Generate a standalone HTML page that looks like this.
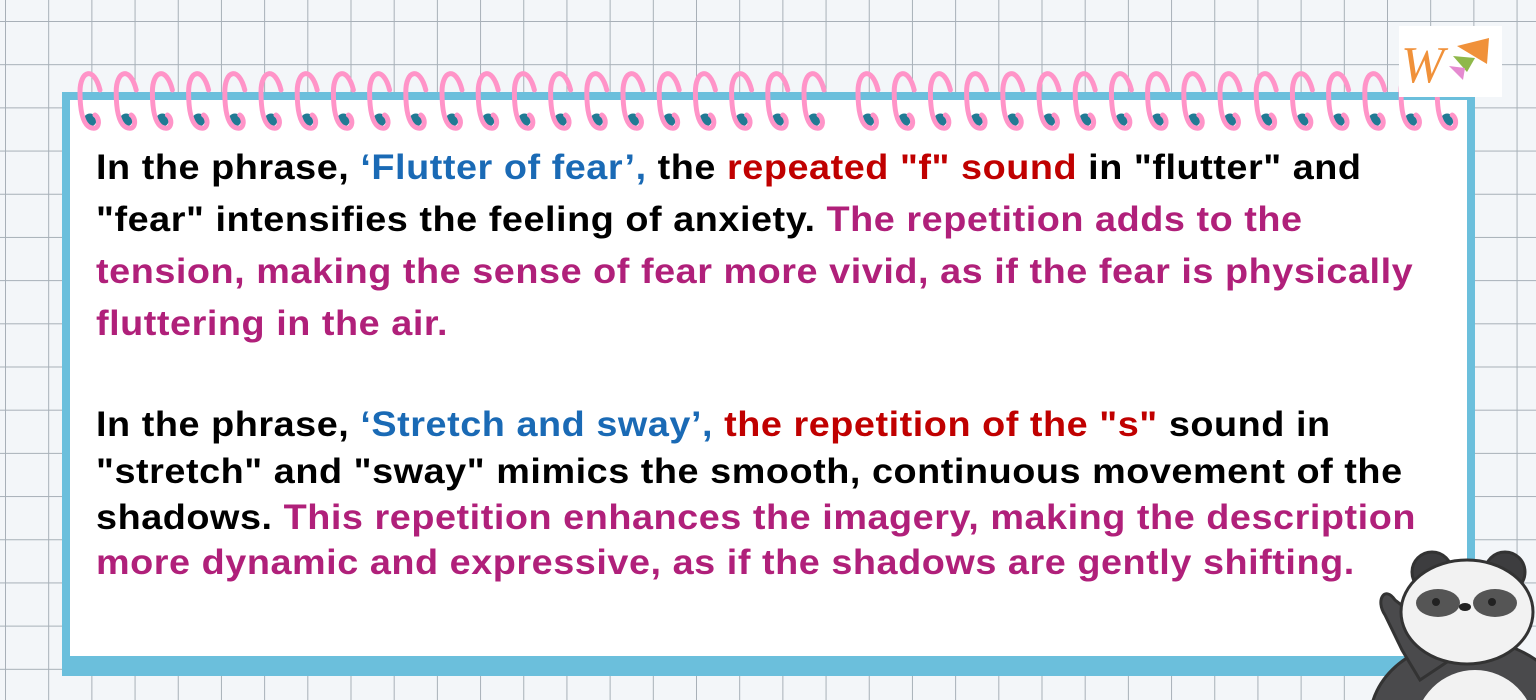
<!DOCTYPE html><html><head><style>
body{margin:0;width:1536px;height:700px;overflow:hidden;position:relative;
background-color:#f3f6f9;
background-image:linear-gradient(#a7b0b8 1px,transparent 1px),linear-gradient(90deg,#a7b0b8 1px,transparent 1px);
background-size:43.2px 43.2px;background-position:5px 21px;font-family:"Liberation Sans",sans-serif}
.card{position:absolute;left:62px;top:92px;width:1397px;height:556px;background:#fff;border:8px solid #6bbfdc;border-bottom-width:20px}
.txt{position:absolute;left:96px;top:0;font-weight:bold;font-size:35px;color:#000;letter-spacing:0.5px;white-space:nowrap;transform:scaleX(1.08);transform-origin:0 0}
.txt div{position:absolute;left:0;height:40px;line-height:40px}
.b{color:#1a6ab5}.r{color:#c00000}.m{color:#b0207a}
.logo{position:absolute;left:1399px;top:26px;width:103px;height:71px;background:#fff}
</style></head><body>
<div class="card"></div>
<svg style="position:absolute;left:0;top:0" width="1536" height="700" id="rings"></svg>
<div class="txt">
<div style="top:148px">In the phrase, <span class="b">‘Flutter of fear’,</span> the <span class="r">repeated "f" sound</span> in "flutter" and</div>
<div style="top:200px">"fear" intensifies the feeling of anxiety. <span class="m">The repetition adds to the</span></div>
<div style="top:252px" class="m">tension, making the sense of fear more vivid, as if the fear is physically</div>
<div style="top:304px" class="m">fluttering in the air.</div>
<div style="top:405px">In the phrase, <span class="b">‘Stretch and sway’,</span> <span class="r">the repetition of the "s"</span> sound in</div>
<div style="top:452px">"stretch" and "sway" mimics the smooth, continuous movement of the</div>
<div style="top:498px">shadows. <span class="m">This repetition enhances the imagery, making the description</span></div>
<div style="top:543px" class="m">more dynamic and expressive, as if the shadows are gently shifting.</div>
</div>
<div class="logo"><svg width="103" height="71"><text x="2" y="56" font-family="Liberation Serif" font-style="italic" font-size="52" fill="#f0913a">W</text><polygon points="58,20 90,12 88,38" fill="#f0913a"/><polygon points="54,30 76,32 68,46" fill="#8fb84a"/><polygon points="50,40 66,42 64,54" fill="#e58ad0"/></svg></div>
<svg style="position:absolute;left:0;top:0" width="1536" height="700">
<ellipse cx="1470" cy="720" rx="100" ry="80" fill="#4a4a4c" stroke="#333" stroke-width="3"/>
<ellipse cx="1475" cy="730" rx="60" ry="60" fill="#f2f2f2"/>
<path d="M1395,600 C1385,585 1375,600 1385,615 L1402,650 L1420,680 L1450,660 L1420,620 Z" fill="#4a4a4c" stroke="#333" stroke-width="3"/>
<circle cx="1432" cy="572" r="20" fill="#3d3d3f" stroke="#333" stroke-width="3"/>
<circle cx="1505" cy="572" r="20" fill="#3d3d3f" stroke="#333" stroke-width="3"/>
<ellipse cx="1467" cy="612" rx="66" ry="52" fill="#f2f2f2" stroke="#333" stroke-width="3"/>
<ellipse cx="1438" cy="603" rx="22" ry="14" fill="#555"/><ellipse cx="1495" cy="603" rx="22" ry="14" fill="#555"/>
<circle cx="1436" cy="602" r="4" fill="#222"/><circle cx="1492" cy="602" r="4" fill="#222"/>
<ellipse cx="1465" cy="607" rx="6" ry="4" fill="#222"/>
</svg>
<script>
var s='';var xs=[];for(var i=0;i<21;i++){xs.push(80+i*36.2)}
for(var i=0;i<17;i++){xs.push(858+i*36.2)}
xs.forEach(function(x){s+='<circle cx="'+(x+10)+'" cy="120" r="6.5" fill="#217a94"/>';
s+='<path d="M'+(x+20)+',90 C'+(x+14)+',66 '+(x)+',70 '+(x)+',92 C'+(x)+',108 '+(x+2)+',126 '+(x+12)+',128 C'+(x+20)+',130 '+(x+20)+',118 '+(x+15)+',115" fill="none" stroke="#ff94c8" stroke-width="5" stroke-linecap="round"/>'});
document.getElementById('rings').innerHTML=s;
</script>
</body></html>
